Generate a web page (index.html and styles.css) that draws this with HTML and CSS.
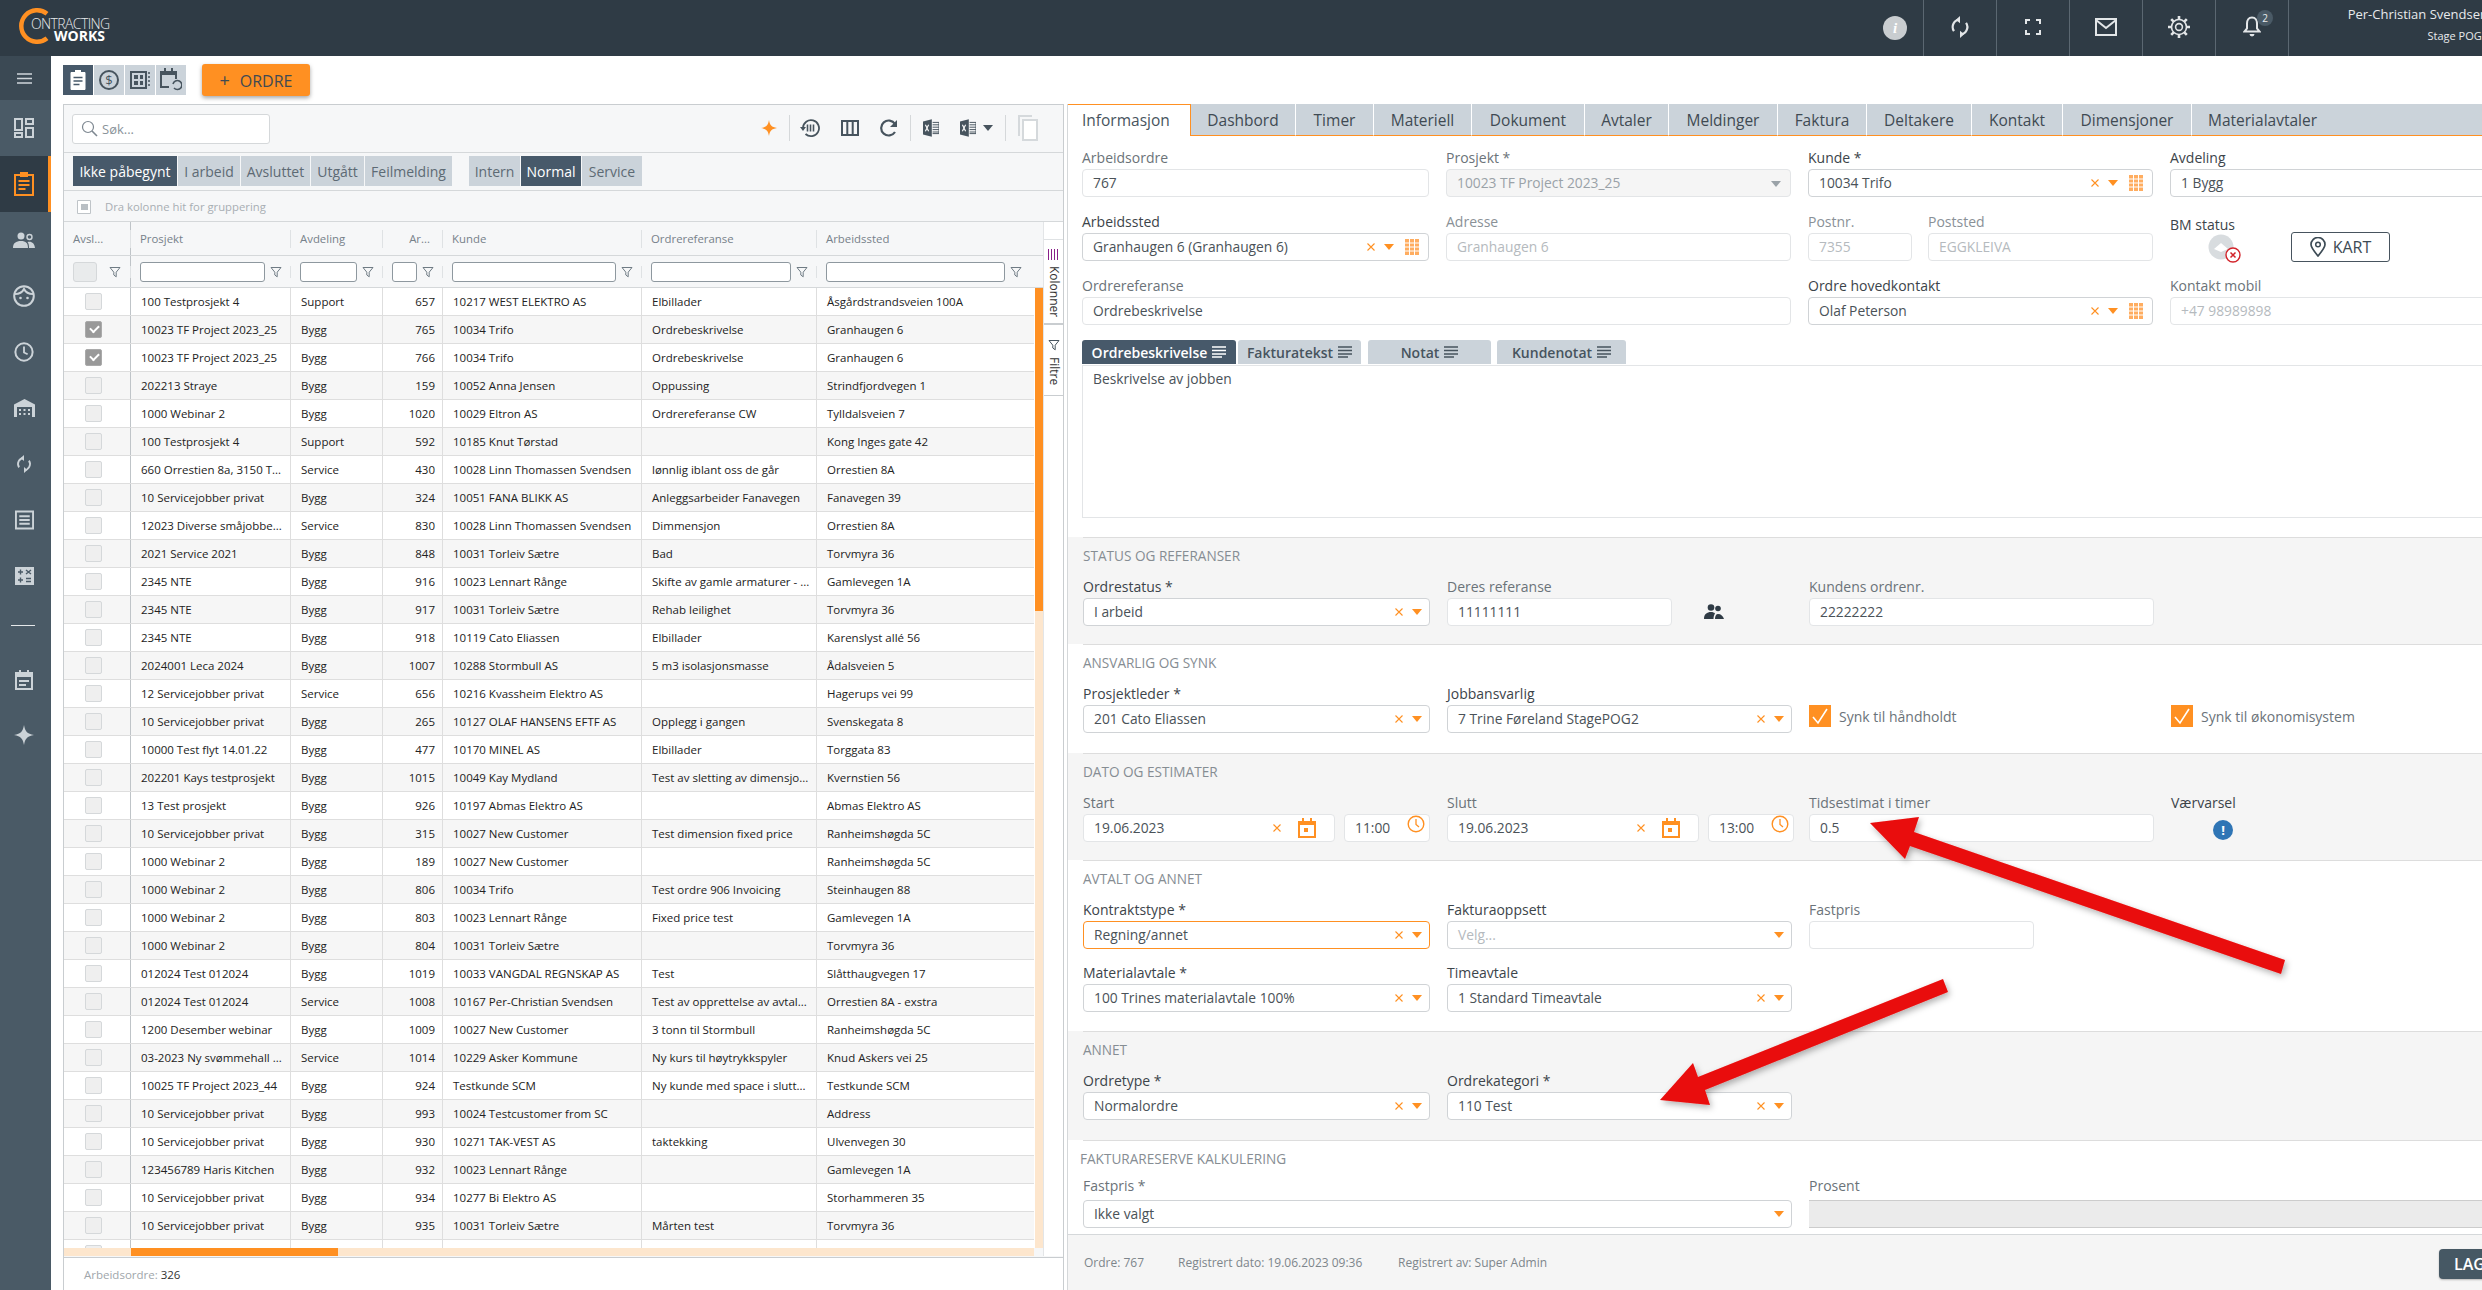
FILE: index.html
```html
<!DOCTYPE html>
<html lang="no">
<head>
<meta charset="utf-8">
<title>Contracting Works</title>
<link rel="stylesheet" href="styles.css">
</head>
<body>
<svg class="defs" width="0" height="0">
<defs>
<symbol id="i-filter" viewBox="0 0 12 12"><path d="M1 1.500h10L7.200 6.200v4.600L4.800 9V6.200z" fill="none" stroke="#6f7b84" stroke-width="1"/></symbol>
<symbol id="i-x" viewBox="0 0 10 10"><path d="M1.500 1.500l7 7M8.500 1.500l-7 7" stroke="#ff9022" stroke-width="1.100" fill="none"/></symbol>
<symbol id="i-caret" viewBox="0 0 10 6"><path d="M0 0h10L5 6z" fill="#ff9022"/></symbol>
<symbol id="i-grid" viewBox="0 0 14 16"><path d="M0 0h14v16H0z" fill="#ffad60"/><path d="M4.500 0v16M9.500 0v16M0 4h14M0 8h14M0 12h14" stroke="#fff" stroke-width="1"/></symbol>
<symbol id="i-cal" viewBox="0 0 18 20"><path d="M1 4h16v15H1z" fill="none" stroke="#ff9022" stroke-width="2"/><path d="M1 3h16v4H1z" fill="#ff9022"/><path d="M4 0h2v4H4zM12 0h2v4h-2zM6 10h4v4H6z" fill="#ff9022"/></symbol>
<symbol id="i-clock" viewBox="0 0 18 18"><circle cx="9" cy="9" r="7.800" fill="none" stroke="#ff9022" stroke-width="1.400"/><path d="M9 4v5.500l3 2.500" fill="none" stroke="#ff9022" stroke-width="1.300"/></symbol>
<symbol id="i-sync" viewBox="0 0 24 24"><path d="M12 4a8 8 0 0 0-6.600 12.500M12 20a8 8 0 0 0 6.600-12.500" fill="none" stroke="currentColor" stroke-width="2.400"/><path d="M12 0v8L7.500 4zM12 24v-8l4.500 4z" fill="currentColor"/></symbol>
<symbol id="i-xls" viewBox="0 0 20 22"><path d="M0 3l11-3v22L0 19z" fill="#47545e"/><path d="M3 7l4 8M7 7l-4 8" stroke="#fff" stroke-width="1.400"/><path d="M12 4h8v14h-8M12 7h8M12 10h8M12 13h8M12 16h8" stroke="#47545e" fill="none" stroke-width="1.200"/></symbol>
<symbol id="i-lines" viewBox="0 0 14 12"><path d="M0 1h14M0 4.500h14M0 8h14M0 11h10" stroke="currentColor" stroke-width="1.600"/></symbol>
</defs>
</svg>
<div class="app">
  <header class="top">
    <div class="logo">
      <svg class="logo-c" viewBox="0 0 32 36" width="32" height="36"><path d="M28 5.800A15.750 15.750 0 1 0 28 30.200" fill="none" stroke="#ff9022" stroke-width="4.500"/></svg>
      <div class="logo-a">ONTRACTING</div>
      <div class="logo-b">WORKS</div>
    </div>
    <div class="top-info"><span class="info-dot">i</span></div>
    <div class="top-btn"><svg width="22" height="24" class="ic-light"><use href="#i-sync"/></svg></div>
    <div class="top-btn"><svg width="16" height="16" viewBox="0 0 16 16"><path d="M1 5V1h4M11 1h4v4M15 11v4h-4M5 15H1v-4" fill="none" stroke="#e3e6e8" stroke-width="2"/></svg></div>
    <div class="top-btn"><svg width="22" height="18" viewBox="0 0 22 18"><path d="M1 1h20v16H1z" fill="none" stroke="#e3e6e8" stroke-width="2"/><path d="M1 2l10 8 10-8" fill="none" stroke="#e3e6e8" stroke-width="2"/></svg></div>
    <div class="top-btn"><svg width="22" height="22" viewBox="0 0 22 22"><circle cx="11" cy="11" r="3.400" fill="none" stroke="#e3e6e8" stroke-width="1.600"/><circle cx="11" cy="11" r="7.500" fill="none" stroke="#e3e6e8" stroke-width="1.600"/><path d="M11 0v3.500M11 18.500V22M0 11h3.500M18.500 11H22M3.200 3.200l2.500 2.500M16.300 16.300l2.500 2.500M18.800 3.200l-2.500 2.500M5.700 16.300l-2.500 2.500" stroke="#e3e6e8" stroke-width="2.600"/></svg></div>
    <div class="top-btn bell"><svg width="18" height="21" viewBox="0 0 18 21"><path d="M9 1.500c-3.500 0-5 3-5 6v5l-2.500 3h15L14 12.500v-5c0-3-1.500-6-5-6z" fill="none" stroke="#e3e6e8" stroke-width="2"/><path d="M6.500 18h5a2.500 2.500 0 0 1-5 0z" fill="#e3e6e8"/></svg><span class="badge">2</span></div>
    <div class="user"><div class="user-name">Per-Christian Svendsen</div><div class="user-org">Stage POG2</div></div>
  </header>
  <div class="main">
    <nav class="side">
      <div class="nav-item nav-burger"><svg width="15" height="11" viewBox="0 0 15 11"><path d="M0 1h15M0 5.500h15M0 10h15" stroke="#cfd5da" stroke-width="1.600"/></svg></div>
      <div class="nav-item"><svg width="20" height="20" viewBox="0 0 20 20"><path d="M1 1h7v11H1zM12 1h7v5h-7zM12 10h7v9h-7zM1 15h7v4H1z" fill="none" stroke="#ccd3d8" stroke-width="2"/></svg></div>
      <div class="nav-item nav-active"><svg width="20" height="24" viewBox="0 0 20 24"><path d="M1 3h18v20H1z" fill="none" stroke="#ff9022" stroke-width="2"/><path d="M7 0h6v4H7zM4.500 9h11M4.500 13h11M4.500 17h7" stroke="#ff9022" stroke-width="2" fill="#ff9022"/></svg></div>
      <div class="nav-item"><svg width="22" height="16" viewBox="0 0 22 16"><circle cx="8" cy="4" r="3.500" fill="#ccd3d8"/><circle cx="16.500" cy="5" r="2.500" fill="none" stroke="#ccd3d8" stroke-width="1.400"/><path d="M0 16c0-5 3-7 8-7s7 2 7 7zM16 16c0-3-.5-5-1.500-6 4-1 7 1 7.500 6z" fill="#ccd3d8"/></svg></div>
      <div class="nav-item"><svg width="22" height="22" viewBox="0 0 22 22"><circle cx="11" cy="11" r="9.800" fill="none" stroke="#ccd3d8" stroke-width="2"/><path d="M2 9c3 0 7-1 9-5 2 4 5 5 9 5" fill="none" stroke="#ccd3d8" stroke-width="2"/><circle cx="7.500" cy="13" r="1.300" fill="#ccd3d8"/><circle cx="14.500" cy="13" r="1.300" fill="#ccd3d8"/></svg></div>
      <div class="nav-item"><svg width="20" height="20" viewBox="0 0 22 22"><circle cx="11" cy="11" r="9.500" fill="none" stroke="#ccd3d8" stroke-width="2.200"/><path d="M11 5v6.500l4 2" fill="none" stroke="#ccd3d8" stroke-width="2"/></svg></div>
      <div class="nav-item"><svg width="21" height="18" viewBox="0 0 21 18"><path d="M0 18V5.500L10.500 0 21 5.500V18h-3V8H3v10z" fill="#ccd3d8"/><path d="M5 10h2v2H5zM9.500 10h2v2h-2zM14 10h2v2h-2zM5 14h2v2H5zM9.500 14h2v2h-2zM14 14h2v2h-2z" fill="#ccd3d8"/></svg></div>
      <div class="nav-item"><svg width="18" height="22" class="ic-nav"><use href="#i-sync"/></svg></div>
      <div class="nav-item"><svg width="19" height="20" viewBox="0 0 20 20"><path d="M1 1h18v18H1z" fill="none" stroke="#ccd3d8" stroke-width="2"/><path d="M4.500 6h11M4.500 10h11M4.500 14h11" stroke="#ccd3d8" stroke-width="2"/></svg></div>
      <div class="nav-item"><svg width="19" height="18" viewBox="0 0 19 18"><path d="M0 0h19v18H0z" fill="#ccd3d8"/><path d="M3 5h5M5.500 2.500v5M11 3l5 4M16 3l-5 4M3 13h5M5.500 10.500v5M11 11.500h5M11 14.500h5" stroke="#4a5a66" stroke-width="1.400"/></svg></div>
      <div class="nav-rule"></div>
      <div class="nav-small"><svg width="18" height="20" viewBox="0 0 18 20"><path d="M1 3h16v16H1z" fill="none" stroke="#ccd3d8" stroke-width="2"/><path d="M4 0h2v4H4zM12 0h2v4h-2zM1 4h16v3H1zM4 10h10v2H4zM4 14h7v2H4z" fill="#ccd3d8"/></svg></div>
      <div class="nav-small"><svg width="20" height="20" viewBox="0 0 20 20"><path d="M10 0c1 6 3 9 10 10-7 1-9 4-10 10-1-6-3-9-10-10 7-1 9-4 10-10z" fill="#ccd3d8"/></svg></div>
    </nav>
    <div class="content">
      <div class="bar">
        <div class="modes">
          <div class="mode mode-on"><svg width="16" height="20" viewBox="0 0 16 20"><path d="M1 2.500h14v17H1z" fill="#fff" stroke="#fff"/><path d="M5 0h6v4H5z" fill="#fff"/><path d="M3.500 7.500h9M3.500 11h9M3.500 14.500h6" stroke="#47596a" stroke-width="1.500"/></svg></div>
          <div class="mode"><svg width="20" height="20" viewBox="0 0 20 20"><circle cx="10" cy="10" r="9" fill="none" stroke="#47545e" stroke-width="2"/><text x="10" y="14.500" text-anchor="middle" class="dollar">$</text></svg></div>
          <div class="mode"><svg width="20" height="18" viewBox="0 0 20 18"><path d="M1 1h15v16H1z" fill="none" stroke="#47545e" stroke-width="2"/><path d="M4 4h4v4H4zM10 4h3v4h-3zM4 10h4v4H4zM10 10h3v4h-3z" fill="#47545e"/><path d="M18 2h2M18 6h2M18 10h2M18 14h2" stroke="#47545e" stroke-width="1.500"/></svg></div>
          <div class="mode"><svg width="22" height="24" viewBox="0 0 22 24"><path d="M9 19H1V4h15v7" fill="none" stroke="#47545e" stroke-width="2"/><path d="M4 0h2v4H4zM11 0h2v4h-2zM1 4h15v3H1z" fill="#47545e"/><path d="M13 16a4.500 4.500 0 1 1 1 4" fill="none" stroke="#47545e" stroke-width="1.600"/></svg></div>
        </div>
        <button class="order-btn"><span class="plus">+</span>ORDRE</button>
      </div>
      <div class="split">
        <section class="lp">
          <div class="lp-tools">
            <div class="search"><svg width="17" height="17" viewBox="0 0 17 17"><circle cx="7" cy="7" r="5.500" fill="none" stroke="#7d8790" stroke-width="1.200"/><path d="M11 11l5 5" stroke="#7d8790" stroke-width="1.600"/></svg><span>Søk...</span></div>
            <div class="tools">
              <svg width="16" height="20" viewBox="0 0 20 20"><path d="M10 0c1 6 3 9 10 10-7 1-9 4-10 10-1-6-3-9-10-10 7-1 9-4 10-10z" fill="#ff9022"/></svg>
              <i class="tsep"></i>
              <svg class="t1" width="20" height="20" viewBox="0 0 20 20"><path d="M3 10a8 8 0 1 1 2.500 6" fill="none" stroke="#47545e" stroke-width="1.800"/><path d="M0 9h6l-3 4z" fill="#47545e"/><path d="M7.500 6.500v7M10.500 6.500v7M13.500 6.500v7" stroke="#47545e" stroke-width="1.600"/></svg>
              <svg class="t2" width="18" height="16" viewBox="0 0 18 16"><path d="M1 1h16v14H1zM6.300 1v14M11.700 1v14" fill="none" stroke="#47545e" stroke-width="2"/></svg>
              <svg class="t2" width="18" height="18" viewBox="0 0 18 18"><path d="M15 13a7.500 7.500 0 1 1 0-8" fill="none" stroke="#47545e" stroke-width="2.200"/><path d="M17 1v7h-7z" fill="#47545e"/></svg>
              <i class="tsep t3"></i>
              <svg class="t3" width="16" height="18"><use href="#i-xls"/></svg>
              <svg class="t2" width="16" height="18"><use href="#i-xls"/></svg>
              <svg class="t4" width="10" height="6" viewBox="0 0 10 6"><path d="M0 0h10L5 6z" fill="#47545e"/></svg>
              <i class="tsep t5"></i>
              <svg class="t5" width="20" height="26" viewBox="0 0 20 26"><path d="M5 5h14v20H5z" fill="#fff" stroke="#d5d9dc" stroke-width="2"/><path d="M1 21V1h13" fill="none" stroke="#d5d9dc" stroke-width="2"/></svg>
            </div>
          </div>
          <div class="lp-status">
            <span class="st st-on st-a">Ikke påbegynt</span><span class="st st-b">I arbeid</span><span class="st st-c">Avsluttet</span><span class="st st-d">Utgått</span><span class="st st-e">Feilmelding</span>
            <span class="st st-f">Intern</span><span class="st st-on st-g">Normal</span><span class="st st-h">Service</span>
          </div>
          <div class="lp-group"><svg width="14" height="14" viewBox="0 0 14 14"><path d="M.5.500h13v13H.5z" fill="#fff" stroke="#bfc4c8"/><path d="M4 4h7v6H4z" fill="#b9bfc4"/></svg><span>Dra kolonne hit for gruppering</span></div>
          <div class="gridwrap">
            <div class="gridmain">
              <div class="ghead">
                <span>Avsl...</span><span>Prosjekt</span><span>Avdeling</span><span class="num">Ar...</span><span>Kunde</span><span>Ordrereferanse</span><span>Arbeidssted</span>
              </div>
              <div class="gfilter">
                <div class="fc"><i class="fcheck"></i><svg class="fi" width="12" height="12"><use href="#i-filter"/></svg></div>
                <div class="fc"><i class="finp"></i><svg class="fi" width="12" height="12"><use href="#i-filter"/></svg></div>
                <div class="fc"><i class="finp"></i><svg class="fi" width="12" height="12"><use href="#i-filter"/></svg></div>
                <div class="fc"><i class="finp"></i><svg class="fi" width="12" height="12"><use href="#i-filter"/></svg></div>
                <div class="fc"><i class="finp"></i><svg class="fi" width="12" height="12"><use href="#i-filter"/></svg></div>
                <div class="fc"><i class="finp"></i><svg class="fi" width="12" height="12"><use href="#i-filter"/></svg></div>
                <div class="fc"><i class="finp"></i><svg class="fi" width="12" height="12"><use href="#i-filter"/></svg></div>
              </div>
              <div class="gbody">
                <div class="rows">
                  <div class="row"><b class="cb"><i></i></b><span>100 Testprosjekt 4</span><span>Support</span><span class="num">657</span><span>10217 WEST ELEKTRO AS</span><span>Elbillader</span><span>Åsgårdstrandsveien 100A</span></div>
                  <div class="row"><b class="cb"><i class="on"></i></b><span>10023 TF Project 2023_25</span><span>Bygg</span><span class="num">765</span><span>10034 Trifo</span><span>Ordrebeskrivelse</span><span>Granhaugen 6</span></div>
                  <div class="row"><b class="cb"><i class="on"></i></b><span>10023 TF Project 2023_25</span><span>Bygg</span><span class="num">766</span><span>10034 Trifo</span><span>Ordrebeskrivelse</span><span>Granhaugen 6</span></div>
                  <div class="row"><b class="cb"><i></i></b><span>202213 Straye</span><span>Bygg</span><span class="num">159</span><span>10052 Anna Jensen</span><span>Oppussing</span><span>Strindfjordvegen 1</span></div>
                  <div class="row"><b class="cb"><i></i></b><span>1000 Webinar 2</span><span>Bygg</span><span class="num">1020</span><span>10029 Eltron AS</span><span>Ordrereferanse CW</span><span>Tylldalsveien 7</span></div>
                  <div class="row"><b class="cb"><i></i></b><span>100 Testprosjekt 4</span><span>Support</span><span class="num">592</span><span>10185 Knut Tørstad</span><span></span><span>Kong Inges gate 42</span></div>
                  <div class="row"><b class="cb"><i></i></b><span>660 Orrestien 8a, 3150 T...</span><span>Service</span><span class="num">430</span><span>10028 Linn Thomassen Svendsen</span><span>lønnlig iblant oss de går</span><span>Orrestien 8A</span></div>
                  <div class="row"><b class="cb"><i></i></b><span>10 Servicejobber privat</span><span>Bygg</span><span class="num">324</span><span>10051 FANA BLIKK AS</span><span>Anleggsarbeider Fanavegen</span><span>Fanavegen 39</span></div>
                  <div class="row"><b class="cb"><i></i></b><span>12023 Diverse småjobbe...</span><span>Service</span><span class="num">830</span><span>10028 Linn Thomassen Svendsen</span><span>Dimmensjon</span><span>Orrestien 8A</span></div>
                  <div class="row"><b class="cb"><i></i></b><span>2021 Service 2021</span><span>Bygg</span><span class="num">848</span><span>10031 Torleiv Sætre</span><span>Bad</span><span>Torvmyra 36</span></div>
                  <div class="row"><b class="cb"><i></i></b><span>2345 NTE</span><span>Bygg</span><span class="num">916</span><span>10023 Lennart Rånge</span><span>Skifte av gamle armaturer - ...</span><span>Gamlevegen 1A</span></div>
                  <div class="row"><b class="cb"><i></i></b><span>2345 NTE</span><span>Bygg</span><span class="num">917</span><span>10031 Torleiv Sætre</span><span>Rehab leilighet</span><span>Torvmyra 36</span></div>
                  <div class="row"><b class="cb"><i></i></b><span>2345 NTE</span><span>Bygg</span><span class="num">918</span><span>10119 Cato Eliassen</span><span>Elbillader</span><span>Karenslyst allé 56</span></div>
                  <div class="row"><b class="cb"><i></i></b><span>2024001 Leca 2024</span><span>Bygg</span><span class="num">1007</span><span>10288 Stormbull AS</span><span>5 m3 isolasjonsmasse</span><span>Ådalsveien 5</span></div>
                  <div class="row"><b class="cb"><i></i></b><span>12 Servicejobber privat</span><span>Service</span><span class="num">656</span><span>10216 Kvassheim Elektro AS</span><span></span><span>Hagerups vei 99</span></div>
                  <div class="row"><b class="cb"><i></i></b><span>10 Servicejobber privat</span><span>Bygg</span><span class="num">265</span><span>10127 OLAF HANSENS EFTF AS</span><span>Opplegg i gangen</span><span>Svenskegata 8</span></div>
                  <div class="row"><b class="cb"><i></i></b><span>10000 Test flyt 14.01.22</span><span>Bygg</span><span class="num">477</span><span>10170 MINEL AS</span><span>Elbillader</span><span>Torggata 83</span></div>
                  <div class="row"><b class="cb"><i></i></b><span>202201 Kays testprosjekt</span><span>Bygg</span><span class="num">1015</span><span>10049 Kay Mydland</span><span>Test av sletting av dimensjo...</span><span>Kvernstien 56</span></div>
                  <div class="row"><b class="cb"><i></i></b><span>13 Test prosjekt</span><span>Bygg</span><span class="num">926</span><span>10197 Abmas Elektro AS</span><span></span><span>Abmas Elektro AS</span></div>
                  <div class="row"><b class="cb"><i></i></b><span>10 Servicejobber privat</span><span>Bygg</span><span class="num">315</span><span>10027 New Customer</span><span>Test dimension fixed price</span><span>Ranheimshøgda 5C</span></div>
                  <div class="row"><b class="cb"><i></i></b><span>1000 Webinar 2</span><span>Bygg</span><span class="num">189</span><span>10027 New Customer</span><span></span><span>Ranheimshøgda 5C</span></div>
                  <div class="row"><b class="cb"><i></i></b><span>1000 Webinar 2</span><span>Bygg</span><span class="num">806</span><span>10034 Trifo</span><span>Test ordre 906 Invoicing</span><span>Steinhaugen 88</span></div>
                  <div class="row"><b class="cb"><i></i></b><span>1000 Webinar 2</span><span>Bygg</span><span class="num">803</span><span>10023 Lennart Rånge</span><span>Fixed price test</span><span>Gamlevegen 1A</span></div>
                  <div class="row"><b class="cb"><i></i></b><span>1000 Webinar 2</span><span>Bygg</span><span class="num">804</span><span>10031 Torleiv Sætre</span><span></span><span>Torvmyra 36</span></div>
                  <div class="row"><b class="cb"><i></i></b><span>012024 Test 012024</span><span>Bygg</span><span class="num">1019</span><span>10033 VANGDAL REGNSKAP AS</span><span>Test</span><span>Slåtthaugvegen 17</span></div>
                  <div class="row"><b class="cb"><i></i></b><span>012024 Test 012024</span><span>Service</span><span class="num">1008</span><span>10167 Per-Christian Svendsen</span><span>Test av opprettelse av avtal...</span><span>Orrestien 8A - exstra</span></div>
                  <div class="row"><b class="cb"><i></i></b><span>1200 Desember webinar</span><span>Bygg</span><span class="num">1009</span><span>10027 New Customer</span><span>3 tonn til Stormbull</span><span>Ranheimshøgda 5C</span></div>
                  <div class="row"><b class="cb"><i></i></b><span>03-2023 Ny svømmehall ...</span><span>Service</span><span class="num">1014</span><span>10229 Asker Kommune</span><span>Ny kurs til høytrykkspyler</span><span>Knud Askers vei 25</span></div>
                  <div class="row"><b class="cb"><i></i></b><span>10025 TF Project 2023_44</span><span>Bygg</span><span class="num">924</span><span>Testkunde SCM</span><span>Ny kunde med space i slutt...</span><span>Testkunde SCM</span></div>
                  <div class="row"><b class="cb"><i></i></b><span>10 Servicejobber privat</span><span>Bygg</span><span class="num">993</span><span>10024 Testcustomer from SC</span><span></span><span>Address</span></div>
                  <div class="row"><b class="cb"><i></i></b><span>10 Servicejobber privat</span><span>Bygg</span><span class="num">930</span><span>10271 TAK-VEST AS</span><span>taktekking</span><span>Ulvenvegen 30</span></div>
                  <div class="row"><b class="cb"><i></i></b><span>123456789 Haris Kitchen</span><span>Bygg</span><span class="num">932</span><span>10023 Lennart Rånge</span><span></span><span>Gamlevegen 1A</span></div>
                  <div class="row"><b class="cb"><i></i></b><span>10 Servicejobber privat</span><span>Bygg</span><span class="num">934</span><span>10277 Bi Elektro AS</span><span></span><span>Storhammeren 35</span></div>
                  <div class="row"><b class="cb"><i></i></b><span>10 Servicejobber privat</span><span>Bygg</span><span class="num">935</span><span>10031 Torleiv Sætre</span><span>Mårten test</span><span>Torvmyra 36</span></div>
                  <div class="row"><b class="cb"><i></i></b><span></span><span></span><span></span><span></span><span></span><span></span></div>
                </div>
                <div class="vscroll"><div class="vthumb"></div></div>
              </div>
              <div class="hscroll"><div class="hthumb"></div></div>
            </div>
            <aside class="gside">
              <div class="gside-tab gside-k"><svg width="11" height="11" viewBox="0 0 11 11"><path d="M.5 0v11M3.500 0v11M6.500 0v11M9.500 0v11" stroke="#8a1f8a" stroke-width="1"/></svg><span>Kolonner</span></div>
              <div class="gside-tab gside-f"><svg width="12" height="12" viewBox="0 0 12 12"><path d="M1 1.500h10L7.200 6.200v4.600L4.800 9V6.200z" fill="none" stroke="#47545e" stroke-width="1"/></svg><span>Filtre</span></div>
            </aside>
          </div>
          <div class="lp-foot"><span class="foot-k">Arbeidsordre:</span> <span class="foot-v">326</span></div>
        </section>
        <section class="rp">
          <div class="rtabs">
            <span class="rtab rtab-on">Informasjon</span><span class="rtab r2">Dashbord</span><span class="rtab r3">Timer</span><span class="rtab r4">Materiell</span><span class="rtab r5">Dokument</span><span class="rtab r6">Avtaler</span><span class="rtab r7">Meldinger</span><span class="rtab r8">Faktura</span><span class="rtab r9">Deltakere</span><span class="rtab r10">Kontakt</span><span class="rtab r11">Dimensjoner</span><span class="rtab r12">Materialavtaler</span>
          </div>
          <div class="rbody">
            <div class="form-top">
              <div class="cols">
                <div class="field"><label>Arbeidsordre</label><div class="inp">767</div></div>
                <div class="field"><label>Prosjekt *</label><div class="inp inp-dis">10023 TF Project 2023_25<svg class="caret" width="10" height="6" viewBox="0 0 10 6"><path d="M0 0h10L5 6z" fill="#9aa2a8"/></svg></div></div>
                <div class="field"><label class="dk">Kunde *</label><div class="inp sel">10034 Trifo<span class="acts acts-g"><svg width="10" height="10"><use href="#i-x"/></svg><svg width="10" height="6"><use href="#i-caret"/></svg><svg width="14" height="16"><use href="#i-grid"/></svg></span></div></div>
                <div class="field"><label class="dk">Avdeling</label><div class="inp sel">1 Bygg</div></div>
                <div class="field"><label class="dk">Arbeidssted</label><div class="inp sel">Granhaugen 6 (Granhaugen 6)<span class="acts acts-g"><svg width="10" height="10"><use href="#i-x"/></svg><svg width="10" height="6"><use href="#i-caret"/></svg><svg width="14" height="16"><use href="#i-grid"/></svg></span></div></div>
                <div class="field"><label class="lt">Adresse</label><div class="inp inp-lt">Granhaugen 6</div></div>
                <div class="two">
                  <div class="field"><label class="lt">Postnr.</label><div class="inp inp-lt">7355</div></div>
                  <div class="field"><label class="lt">Poststed</label><div class="inp inp-lt">EGGKLEIVA</div></div>
                </div>
                <div class="bm">
                  <div class="bm-left"><label class="dk">BM status</label><div class="bm-ic"><svg width="34" height="30" viewBox="0 0 34 30"><circle cx="13" cy="13" r="12.500" fill="#d8dcdf"/><path d="M6 15l7-6 7 6-7 3z" fill="#fff"/><circle cx="25" cy="21" r="7" fill="#fff" stroke="#d2232a" stroke-width="1.400"/><path d="M22.500 18.500l5 5M27.500 18.500l-5 5" stroke="#d2232a" stroke-width="1.500"/></svg></div></div>
                  <button class="kart"><svg width="16" height="20" viewBox="0 0 16 20"><path d="M8 19C3 13 1 10 1 7.500a7 7 0 0 1 14 0C15 10 13 13 8 19z" fill="none" stroke="#3d4b55" stroke-width="1.700"/><circle cx="8" cy="7.500" r="2.300" fill="none" stroke="#3d4b55" stroke-width="1.500"/></svg>KART</button>
                </div>
                <div class="field span2"><label>Ordrereferanse</label><div class="inp">Ordrebeskrivelse</div></div>
                <div class="field"><label class="dk">Ordre hovedkontakt</label><div class="inp sel">Olaf Peterson<span class="acts acts-g"><svg width="10" height="10"><use href="#i-x"/></svg><svg width="10" height="6"><use href="#i-caret"/></svg><svg width="14" height="16"><use href="#i-grid"/></svg></span></div></div>
                <div class="field"><label>Kontakt mobil</label><div class="inp inp-lt">+47 98989898</div></div>
              </div>
            </div>
            <div class="subtabs">
              <span class="sub sub-on sub-a">Ordrebeskrivelse<svg width="14" height="12"><use href="#i-lines"/></svg></span><span class="sub sub-b">Fakturatekst<svg width="14" height="12"><use href="#i-lines"/></svg></span><span class="sub sub-c">Notat<svg width="14" height="12"><use href="#i-lines"/></svg></span><span class="sub sub-d">Kundenotat<svg width="14" height="12"><use href="#i-lines"/></svg></span>
            </div>
            <div class="textbox">Beskrivelse av jobben</div>

            <div class="sec sec-gray pb18"><div class="sec-in">
              <div class="sec-title">STATUS OG REFERANSER</div>
              <div class="cols">
                <div class="field"><label class="dk">Ordrestatus *</label><div class="inp sel">I arbeid<span class="acts"><svg width="10" height="10"><use href="#i-x"/></svg><svg width="10" height="6"><use href="#i-caret"/></svg></span></div></div>
                <div class="ref">
                  <div class="field ref-f"><label>Deres referanse</label><div class="inp">11111111</div></div>
                  <svg class="ref-ic" width="20" height="16" viewBox="0 0 20 16"><circle cx="7" cy="3.500" r="3.300" fill="#2f3b45"/><circle cx="14" cy="4.500" r="2.800" fill="#2f3b45"/><path d="M0 15c0-5 3-7 7-7 2 0 3 .5 4 1.500-1 1.500-1.500 3.500-1.500 5.500zM11 15c0-3 1-5 3-5 3 0 5 2 6 5z" fill="#2f3b45"/></svg>
                </div>
                <div class="field"><label>Kundens ordrenr.</label><div class="inp">22222222</div></div>
              </div>
            </div></div>

            <div class="sec pb20"><div class="sec-in">
              <div class="sec-title">ANSVARLIG OG SYNK</div>
              <div class="cols">
                <div class="field"><label class="dk">Prosjektleder *</label><div class="inp sel">201 Cato Eliassen<span class="acts"><svg width="10" height="10"><use href="#i-x"/></svg><svg width="10" height="6"><use href="#i-caret"/></svg></span></div></div>
                <div class="field"><label class="dk">Jobbansvarlig</label><div class="inp sel">7 Trine Føreland StagePOG2<span class="acts"><svg width="10" height="10"><use href="#i-x"/></svg><svg width="10" height="6"><use href="#i-caret"/></svg></span></div></div>
                <div class="chk"><svg width="22" height="22" viewBox="0 0 22 22"><path d="M0 0h22v22H0z" fill="#ff9022"/><path d="M4 12l5 6 9-14" fill="none" stroke="#fff" stroke-width="1.600"/></svg><span>Synk til håndholdt</span></div>
                <div class="chk"><svg width="22" height="22" viewBox="0 0 22 22"><path d="M0 0h22v22H0z" fill="#ff9022"/><path d="M4 12l5 6 9-14" fill="none" stroke="#fff" stroke-width="1.600"/></svg><span>Synk til økonomisystem</span></div>
              </div>
            </div></div>

            <div class="sec sec-gray pb18"><div class="sec-in">
              <div class="sec-title">DATO OG ESTIMATER</div>
              <div class="cols">
                <div class="dt">
                  <div class="field"><label>Start</label><div class="inp sel inp-soft">19.06.2023<span class="acts acts-d"><svg width="10" height="10"><use href="#i-x"/></svg><svg width="18" height="20"><use href="#i-cal"/></svg></span></div></div>
                  <div class="field"><label class="blank">&nbsp;</label><div class="inp sel inp-soft">11:00<span class="acts acts-t"><svg width="18" height="18"><use href="#i-clock"/></svg></span></div></div>
                </div>
                <div class="dt">
                  <div class="field"><label>Slutt</label><div class="inp sel inp-soft">19.06.2023<span class="acts acts-d"><svg width="10" height="10"><use href="#i-x"/></svg><svg width="18" height="20"><use href="#i-cal"/></svg></span></div></div>
                  <div class="field"><label class="blank">&nbsp;</label><div class="inp sel inp-soft">13:00<span class="acts acts-t"><svg width="18" height="18"><use href="#i-clock"/></svg></span></div></div>
                </div>
                <div class="field"><label>Tidsestimat i timer</label><div class="inp">0.5</div></div>
                <div class="field"><label class="dk">Værvarsel</label><div class="vv"><span class="vv-dot">!</span></div></div>
              </div>
            </div></div>

            <div class="sec pb19"><div class="sec-in">
              <div class="sec-title">AVTALT OG ANNET</div>
              <div class="cols cols-g">
                <div class="field"><label class="dk">Kontraktstype *</label><div class="inp sel inp-focus">Regning/annet<span class="acts"><svg width="10" height="10"><use href="#i-x"/></svg><svg width="10" height="6"><use href="#i-caret"/></svg></span></div></div>
                <div class="field"><label class="dk">Fakturaoppsett</label><div class="inp sel ph">Velg...<span class="acts"><svg width="10" height="6"><use href="#i-caret"/></svg></span></div></div>
                <div class="field fp"><label>Fastpris</label><div class="inp"></div></div>
                <div class="field"></div>
                <div class="field"><label class="dk">Materialavtale *</label><div class="inp sel">100 Trines materialavtale 100%<span class="acts"><svg width="10" height="10"><use href="#i-x"/></svg><svg width="10" height="6"><use href="#i-caret"/></svg></span></div></div>
                <div class="field"><label class="dk">Timeavtale</label><div class="inp sel">1 Standard Timeavtale<span class="acts"><svg width="10" height="10"><use href="#i-x"/></svg><svg width="10" height="6"><use href="#i-caret"/></svg></span></div></div>
              </div>
            </div></div>

            <div class="sec sec-gray pb20"><div class="sec-in">
              <div class="sec-title">ANNET</div>
              <div class="cols">
                <div class="field"><label class="dk">Ordretype *</label><div class="inp sel">Normalordre<span class="acts"><svg width="10" height="10"><use href="#i-x"/></svg><svg width="10" height="6"><use href="#i-caret"/></svg></span></div></div>
                <div class="field"><label class="dk">Ordrekategori *</label><div class="inp sel">110 Test<span class="acts"><svg width="10" height="10"><use href="#i-x"/></svg><svg width="10" height="6"><use href="#i-caret"/></svg></span></div></div>
              </div>
            </div></div>

            <div class="sec pb0"><div class="sec-in">
              <div class="sec-title sec-title-out">FAKTURARESERVE KALKULERING</div>
              <div class="cols">
                <div class="field span2"><label>Fastpris *</label><div class="inp sel">Ikke valgt<span class="acts"><svg width="10" height="6"><use href="#i-caret"/></svg></span></div></div>
                <div class="field span2"><label>Prosent</label><div class="inp inp-grey"></div></div>
              </div>
            </div></div>
          </div>
          <div class="rfoot">
            <span class="rf1">Ordre: 767</span><span class="rf2">Registrert dato: 19.06.2023 09:36</span><span class="rf3">Registrert av: Super Admin</span>
            <button class="save">LAGRE</button>
          </div>
        </section>
      </div>
    </div>
  </div>
  <svg class="arrows" width="2482" height="1290" viewBox="0 0 2482 1290">
    <defs><filter id="sh" x="-10%" y="-10%" width="120%" height="120%"><feDropShadow dx="2" dy="3" stdDeviation="3" flood-color="#000" flood-opacity=".3"/></filter></defs>
    <path filter="url(#sh)" fill="#e90a0a" d="M1870 823L1919 817L1914 832L2285 960L2281 974L1910 846L1905 859z"/>
    <path filter="url(#sh)" fill="#e90a0a" d="M1660 1100L1693 1063L1698 1077L1943 979L1948 992L1705 1090L1710 1105z"/>
  </svg>
</div>
</body>
</html>
```
FILE: styles.css
```css
* { box-sizing: border-box; }
html, body { margin: 0; padding: 0; height: 100%; overflow: hidden; }
body { font-family: "Open Sans", sans-serif; font-size: 13px; color: #444; background: #fff; }
.defs { position: absolute; }
.app { position: relative; width: 2482px; height: 1290px; overflow: hidden; display: flex; flex-direction: column; }
.arrows { position: absolute; left: 0; top: 0; pointer-events: none; }

/* top bar */
.top { height: 56px; background: #2f3b45; display: flex; align-items: stretch; flex: none; }
.logo { position: relative; width: 1850px; flex: none; }
.logo-c { position: absolute; left: 19px; top: 8px; }
.logo-a { position: absolute; left: 31px; top: 18px; font-size: 14px; font-weight: 300; color: #e8eaec; line-height: 12px; letter-spacing: -.6px; }
.logo-b { position: absolute; left: 54px; top: 30px; font-size: 14px; font-weight: 700; color: #fff; line-height: 12px; }
.top-info { width: 73px; flex: none; display: flex; align-items: center; justify-content: flex-end; padding-right: 16px; }
.info-dot { width: 24px; height: 24px; border-radius: 50%; background: #c9cdd0; color: #fff; font: italic 700 15px/24px "Liberation Serif", serif; text-align: center; }
.top-btn { width: 73px; flex: none; border-left: 1px solid #5b6771; display: flex; align-items: center; justify-content: center; position: relative; padding-bottom: 3px; }
.ic-light { color: #e3e6e8; }
.ic-nav { color: #ccd3d8; }
.badge { position: absolute; left: 41px; top: 10px; width: 16px; height: 16px; border-radius: 50%; background: #4a5a66; color: #e8eaec; font-size: 10px; line-height: 16px; text-align: center; }
.user { flex: none; width: 204px; border-left: 1px solid #5b6771; color: #e8eaec; text-align: right; padding-top: 4px; }
.user-name { font-size: 13px; line-height: 20px; padding-right: 4px; }
.user-org { font-size: 11px; line-height: 24px; padding-right: 4px; }

/* sidebar */
.main { flex: 1; display: flex; min-height: 0; }
.side { width: 51px; flex: none; background: #4a5a66; display: flex; flex-direction: column; }
.nav-item { height: 56px; display: flex; align-items: center; justify-content: center; padding-right: 3px; flex: none; }
.nav-burger { height: 44px; background: #3b4954; }
.nav-active { background: #2f3b45; border-right: 3px solid #ff9022; padding-right: 0; }
.nav-rule { width: 24px; height: 1px; background: #e5e8ea; margin: 21px 0 0 11px; }
.nav-small { height: 55px; display: flex; align-items: center; justify-content: center; padding-right: 3px; flex: none; margin-top: 0; }
.nav-rule + .nav-small { margin-top: 26px; }

/* action bar */
.content { flex: 1; min-width: 0; display: flex; flex-direction: column; }
.bar { height: 48px; flex: none; display: flex; align-items: flex-start; padding: 8px 0 0 12px; }
.modes { display: flex; gap: 1px; margin-top: 1px; }
.mode { width: 30px; height: 30px; background: #cbd3da; display: flex; align-items: center; justify-content: center; }
.mode-on { background: #47596a; }
.dollar { font: 400 13px "Open Sans", sans-serif; fill: #47545e; }
.order-btn { margin-left: 16px; width: 108px; height: 32px; border: 0; border-radius: 3px; background: #ff9022; color: #3f4a53; font: 400 16px "Open Sans", sans-serif; box-shadow: 0 2px 4px rgba(0,0,0,.35); padding: 0; }
.plus { font-size: 18px; margin-right: 10px; }
.split { flex: 1; min-height: 0; display: flex; padding-left: 12px; }

/* left panel */
.lp { width: 1001px; flex: none; border: 1px solid #c9cdd0; border-width: 1px 1px 0; background: #f6f7f8; display: flex; flex-direction: column; }
.lp-tools { height: 48px; flex: none; border-bottom: 1px solid #d5d8da; display: flex; align-items: center; padding-left: 8px; position: relative; }
.search { width: 198px; height: 30px; border: 1px solid #d5d8da; border-radius: 3px; background: #fff; display: flex; align-items: center; padding-left: 8px; color: #8a939a; gap: 4px; font-size: 13px; }
.tools { position: absolute; left: 697px; top: 8px; height: 30px; display: flex; align-items: center; }
.tsep { width: 1px; height: 26px; background: #d5d8da; margin-left: 12px; flex: none; }
.tools svg { flex: none; }
.t1 { margin-left: 10px; }
.t2 { margin-left: 21px; }
.t3 { margin-left: 12px; }
.t4 { margin-left: 7px; }
.t5 { margin-left: 12px; }
.lp-status { height: 38px; flex: none; border-bottom: 1px solid #d5d8da; display: flex; padding: 3px 0 0 9px; gap: 1px; }
.st { height: 30px; background: #cbd3da; color: #5d6a74; font-size: 14px; line-height: 31px; text-align: center; flex: none; }
.st-on { background: #47596a; color: #fff; }
.st-a { width: 104px; }
.st-b { width: 62px; }
.st-c { width: 69px; }
.st-d { width: 53px; }
.st-e { width: 87px; }
.st-f { width: 51px; margin-left: 16px; }
.st-g { width: 60px; }
.st-h { width: 60px; }
.lp-group { height: 31px; flex: none; border-bottom: 1px solid #d5d8da; display: flex; align-items: center; padding: 1px 0 0 13px; font-size: 11.300px; color: #a8aeb3; gap: 14px; }
.gridwrap { flex: 1; min-height: 0; display: flex; }
.gridmain { width: 979px; flex: none; display: flex; flex-direction: column; min-height: 0; }
.ghead, .gfilter, .row { display: grid; grid-template-columns: 67px 160px 92px 60px 199px 175px 214px; }
.ghead { height: 34px; flex: none; border-bottom: 1px solid #d5d8da; font-size: 11.400px; color: #76818a; line-height: 33px; }
.ghead span { padding-left: 9px; position: relative; }
.ghead span:first-child { border-right: 1px solid #bfc4c8; }
.ghead span + span::before, .fc + .fc::before { content: ""; position: absolute; left: -1px; top: 8px; height: 18px; width: 1px; background: #dfe2e4; }
.ghead .num { text-align: right; padding-right: 13px; }
.gfilter { height: 32px; flex: none; border-bottom: 1px solid #d5d8da; }
.fc { display: flex; align-items: center; padding: 0 26px 0 9px; position: relative; }
.fc:first-child { border-right: 1px solid #bfc4c8; }
.fc + .fc::before { top: 10px; height: 12px; }
.fi { position: absolute; right: 9px; top: 10px; }
.fcheck { width: 24px; height: 20px; background: #e9ebec; border: 1px solid #d5d8da; border-radius: 3px; }
.finp { flex: 1; min-width: 0; height: 20px; background: #fff; border: 1px solid #8e989f; border-radius: 3px; }
.gbody { flex: 1; min-height: 0; display: flex; background: #fff; }
.rows { width: 970px; flex: none; overflow: hidden; }
.row { height: 28px; border-bottom: 1px solid #dedede; background: #fff; font-size: 11.500px; color: #222; line-height: 28px; }
.row:nth-child(even) { background: #f6f6f6; }
.row > span { padding-left: 10px; height: 27px; border-right: 1px solid #dedede; white-space: nowrap; overflow: hidden; }
.row > span:last-child { border-right: 0; }
.row .num { text-align: right; padding: 0 7px 0 0; }
.cb { display: flex; align-items: center; justify-content: center; border-right: 1px solid #bfc4c8; padding-right: 8px; }
.cb i { width: 17px; height: 17px; border: 1px solid #d5d8da; border-radius: 2px; background: #efefef; position: relative; display: block; }
.cb i.on { background: #999; border-color: #aaa; }
.cb i.on::after { content: ""; position: absolute; left: 4px; top: 3px; width: 7px; height: 4px; border: solid #fff; border-width: 0 0 2px 2px; transform: rotate(-45deg); }
.vscroll { width: 8px; margin-left: 1px; flex: none; background: #fde6cd; }
.vthumb { height: 323px; background: #ff9022; }
.hscroll { height: 8px; flex: none; width: 970px; background: #fde6cd; padding-left: 67px; }
.hthumb { width: 207px; height: 8px; background: #ff9022; }
.gside { width: 20px; flex: none; background: #fff; border-left: 1px solid #e3e5e7; padding-top: 17px; }
.gside-tab { display: flex; flex-direction: column; align-items: center; font-size: 12px; color: #333; }
.gside-k { border-top: 1px solid #dfe2e4; height: 86px; padding-top: 9px; border-bottom: 2px solid #c9cdd0; }
.gside-f { height: 71px; padding-top: 14px; border-bottom: 1px solid #c9cdd0; }
.gside-tab span { writing-mode: vertical-rl; margin-top: 6px; line-height: 14px; }
.lp-foot { height: 33px; flex: none; background: #fff; border-top: 1px solid #c9cdd0; padding: 8px 0 0 20px; font-size: 11.500px; line-height: 18px; margin-top: 1px; }
.foot-k { color: #a0a6ab; }
.foot-v { color: #333; }

/* right panel */
.rp { flex: 1; min-width: 0; margin-left: 3px; border-left: 1px solid #d5d8da; display: flex; flex-direction: column; overflow: hidden; }
.rtabs { height: 32px; flex: none; display: flex; }
.rtab { height: 32px; flex: none; background: #cbd3da; border-bottom: 1.500px solid #ff9022; border-right: 1px solid #fff; color: #3f4a53; font-size: 15.500px; line-height: 32px; text-align: center; }
.rtab-on { width: 123px; background: #fff; border: 1px solid #ff9022; border-width: 1px 1px 0 0; text-align: left; padding-left: 14px; color: #47545e; line-height: 30px; }
.r2 { width: 105px; }
.r3 { width: 78px; }
.r4 { width: 98px; }
.r5 { width: 113px; }
.r6 { width: 84px; }
.r7 { width: 109px; }
.r8 { width: 89px; }
.r9 { width: 105px; }
.r10 { width: 91px; }
.r11 { width: 129px; }
.r12 { flex: 1; border-right: 0; text-align: left; padding-left: 16px; }
.rbody { flex: 1; min-height: 0; overflow: hidden; }
.form-top { padding: 12px 0 0 14px; }
.cols { display: grid; grid-template-columns: 347px 345px 345px 347px; column-gap: 17px; row-gap: 15px; }
.cols-g { row-gap: 14px; }
.field { min-width: 0; }
.field label { display: block; height: 21px; font-size: 14px; line-height: 19px; color: #6b7379; }
.field label.dk, .bm label { color: #3c444a; }
.field label.lt { color: #8a9197; }
.span2 { grid-column: span 2; }
.inp { height: 28px; border: 1px solid #e3e5e7; border-radius: 4px; background: #fff; padding: 0 10px; font-size: 13.800px; line-height: 26px; color: #4a5258; position: relative; white-space: nowrap; overflow: hidden; }
.sel { border-color: #d0d3d6; }
.inp-soft { border-color: #e3e5e7; }
.inp-dis { background: #f5f5f5; color: #9aa2a8; }
.inp-lt { color: #b5babe; }
.inp-grey { background: #ebebeb; border-color: #cccccc; border-radius: 0; border-width: 1px 0; }
.inp-focus { border-color: #ff9022; }
.ph { color: #b5babe; }
.caret { position: absolute; right: 9px; top: 11px; }
.acts { position: absolute; right: 7px; top: 0; height: 26px; display: flex; align-items: center; gap: 8px; }
.acts-g { right: 9px; }
.acts-g svg:last-child { margin-left: 3px; }
.acts-d { gap: 16px; right: 18px; }
.acts-t { right: 4px; top: -4px; }
.two { display: grid; grid-template-columns: 104px 225px; column-gap: 16px; }
.bm { display: flex; height: 49px; }
.bm-left { width: 121px; }
.bm label { display: block; font-size: 14px; line-height: 19px; margin-top: 3px; }
.bm-ic { margin: 0 0 0 38px; height: 27px; }
.kart { margin-top: 20px; width: 99px; height: 30px; border: 1px solid #47545e; border-radius: 3px; background: #fff; color: #3d4b55; font: 400 16px "Open Sans", sans-serif; display: flex; align-items: center; justify-content: center; gap: 7px; padding: 0; }
.subtabs { display: flex; margin: 15px 0 0 14px; gap: 2px; height: 24px; }
.sub { height: 24px; background: #cbd3da; color: #47545e; font-size: 14px; font-weight: 600; line-height: 23px; text-align: center; border-radius: 3px 3px 0 0; display: flex; align-items: center; justify-content: center; gap: 5px; }
.sub-on { background: #47596a; color: #fff; }
.sub-a { width: 154px; }
.sub-b { width: 123px; margin-right: 5px; }
.sub-c { width: 123px; margin-right: 4px; }
.sub-d { width: 129px; }
.textbox { margin: 1px 0 0 14px; height: 153px; border: 1px solid #e3e5e7; border-right: 0; padding: 3px 10px; font-size: 13.800px; line-height: 20px; color: #4a5258; }
.sec { margin-top: 0; padding-left: 15px; }
.textbox + .sec { margin-top: 19px; }
.sec-gray { background: #f5f5f5; }
.sec-in { border-top: 1px solid #ddd; padding-top: 8px; }
.pb18 .sec-in { padding-bottom: 18px; }
.pb19 .sec-in { padding-bottom: 19px; }
.pb20 .sec-in { padding-bottom: 20px; }
.pb0 .sec-in { padding-bottom: 0; }
.sec-title { height: 20px; line-height: 20px; font-size: 13.600px; color: #868d93; margin-bottom: 11px; }
.sec-title-out { margin-left: -3px; margin-bottom: 7px; }
.pb0 .field label { height: 24px; }
.ref { display: flex; align-items: flex-end; }
.ref-f { width: 225px; }
.ref-ic { margin: 0 0 6px 32px; }
.chk { display: flex; align-items: center; gap: 8px; padding-top: 0; color: #6b7379; font-size: 14px; height: 22px; margin-top: 21px; }
.dt { display: grid; grid-template-columns: 252px 86px; column-gap: 9px; }
.vv { height: 28px; display: flex; align-items: center; padding-left: 42px; }
.vv-dot { width: 20px; height: 20px; border-radius: 50%; background: #2f75b5; color: #fff; text-align: center; font-weight: 700; font-size: 13px; line-height: 20px; margin-top: 3px; }
.fp { width: 225px; }
.rfoot { height: 56px; flex: none; background: #f5f5f5; border-top: 1px solid #d5d8da; display: flex; align-items: center; padding-left: 16px; position: relative; font-size: 12px; color: #7d858b; }
.rf1 { width: 94px; }
.rf2 { width: 220px; }
.save { position: absolute; left: 1371px; top: 14px; width: 70px; height: 30px; border: 0; border-radius: 4px; background: #465864; color: #fff; font: 600 16px "Open Sans", sans-serif; text-align: left; padding-left: 15px; box-shadow: 0 1px 2px rgba(0,0,0,.25); }
```
